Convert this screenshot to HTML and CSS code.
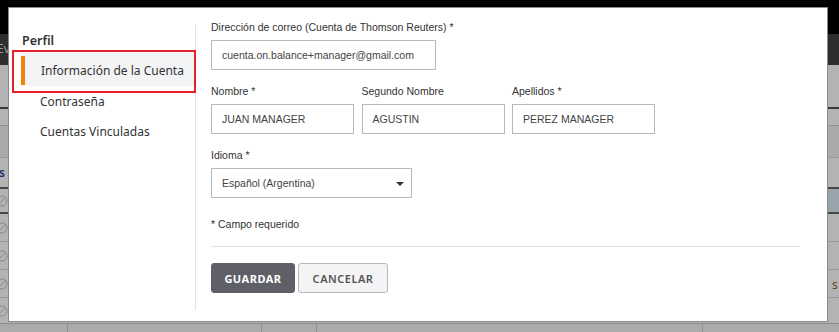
FILE: index.html
```html
<!DOCTYPE html>
<html lang="es">
<head>
<meta charset="utf-8">
<title>Perfil</title>
<link rel="stylesheet" href="styles.css">
</head>
<body>
<div class="backdrop">
  <div class="bd-top"></div>
  <div class="bd-dark"><span class="bd-text">Ev</span></div>
  <div class="bd-row r1"></div>
  <div class="bd-row r2"></div>
  <div class="bd-row r3"></div>
  <div class="bd-row r4"><span class="cut-left blue">s</span></div>
  <div class="bd-row r5"><span class="cut-left"><svg class="ban" viewBox="0 0 12 12"><circle cx="6" cy="6" r="5"/><line x1="2.5" y1="9.5" x2="9.5" y2="2.5"/></svg></span><span class="sel-cell"></span></div>
  <div class="bd-row r6"><span class="cut-left"><svg class="ban" viewBox="0 0 12 12"><circle cx="6" cy="6" r="5"/><line x1="2.5" y1="9.5" x2="9.5" y2="2.5"/></svg></span></div>
  <div class="bd-row r7"><span class="cut-left"><svg class="ban" viewBox="0 0 12 12"><circle cx="6" cy="6" r="5"/><line x1="2.5" y1="9.5" x2="9.5" y2="2.5"/></svg></span></div>
  <div class="bd-row r8"><span class="cut-left"><svg class="ban" viewBox="0 0 12 12"><circle cx="6" cy="6" r="5"/><line x1="2.5" y1="9.5" x2="9.5" y2="2.5"/></svg></span><span class="cut-right">s</span></div>
  <div class="bd-row r9"><span class="cut-left"><svg class="ban" viewBox="0 0 12 12"><circle cx="6" cy="6" r="5"/><line x1="2.5" y1="9.5" x2="9.5" y2="2.5"/></svg></span></div>
  <div class="bd-bottom">
    <span class="bcell c1"></span><span class="bcell c2"></span><span class="bcell c3"></span><span class="bcell c4"></span><span class="bcell c5"></span>
  </div>
</div>

<div class="modal">
  <nav class="side">
    <div class="side-title">Perfil</div>
    <a class="side-item active">Información de la Cuenta</a>
    <a class="side-item">Contraseña</a>
    <a class="side-item">Cuentas Vinculadas</a>
  </nav>
  <div class="highlight"></div>
  <div class="vdivider"></div>
  <form class="form">
    <div class="field">
      <label class="lbl">Dirección de correo (Cuenta de Thomson Reuters) *</label>
      <div class="input email">cuenta.on.balance+manager@gmail.com</div>
    </div>
    <div class="names">
      <div class="field">
        <label class="lbl">Nombre *</label>
        <div class="input">JUAN MANAGER</div>
      </div>
      <div class="field">
        <label class="lbl">Segundo Nombre</label>
        <div class="input">AGUSTIN</div>
      </div>
      <div class="field">
        <label class="lbl">Apellidos *</label>
        <div class="input">PEREZ MANAGER</div>
      </div>
    </div>
    <div class="field">
      <label class="lbl">Idioma *</label>
      <div class="input select"><span>Español (Argentina)</span><span class="caret"></span></div>
    </div>
    <div class="req">* Campo requerido</div>
    <div class="hdivider"></div>
    <div class="buttons">
      <button type="button" class="btn primary">GUARDAR</button>
      <button type="button" class="btn secondary">CANCELAR</button>
    </div>
  </form>
</div>
</body>
</html>
```
FILE: styles.css
```css
* { box-sizing: border-box; }
html, body { margin: 0; padding: 0; }
body {
  width: 839px;
  height: 332px;
  overflow: hidden;
  position: relative;
  font-family: "Liberation Sans", Arial, sans-serif;
  background: #b3b3b3;
}

/* backdrop page */
.backdrop { width: 839px; }
.bd-top { height: 34px; background: #000; }
.bd-dark {
  height: 31px; background: #2e2e2e;
  font-family: "Noto Sans", sans-serif; font-size: 12px; color: #9a9a9a;
  padding-top: 6px;
}
.bd-text { margin-left: -3px; }
.bd-row { position: relative; background: #b3b3b3; border-bottom: 1px solid #999; }
.r1 { height: 44px; border-bottom: 2px solid #3a3a3a; }
.r2 { height: 17px; border-bottom: 1px solid #8f8f8f; }
.r3 { height: 32px; background: #aaaaaa; }
.r4 { height: 31px; border-bottom: 2px solid #474747; }
.r5 { height: 25px; border-bottom: 2px solid #474747; }
.r6 { height: 28px; }
.r7 { height: 28px; }
.r8 { height: 28px; }
.r9 { height: 25px; border-bottom: none; }
.sel-cell { position: absolute; right: 0; top: 0; width: 20px; height: 100%; background: #97a4ab; }
.cut-left {
  position: absolute; left: -4px; top: 50%; transform: translateY(-50%);
  font-family: "Noto Sans", sans-serif; font-size: 12px; line-height: 12px; color: #333;
  display: flex;
}
.cut-left.blue { left: -1px; color: #1d2a66; font-weight: 600; }
.cut-right {
  position: absolute; left: 832px; top: 50%; transform: translateY(-50%);
  font-family: "Noto Sans", sans-serif; font-size: 12px; color: #5a4414;
}
.ban { width: 12px; height: 12px; fill: none; stroke: #8a8a8a; stroke-width: 1; }
.bd-bottom {
  height: 10px; background: #ababab; border-top: 1px solid #8c8c8c;
  display: flex;
}
.bcell { height: 100%; border-right: 1px solid #909090; }
.c1 { width: 68px; }
.c2 { width: 194px; }
.c3 { width: 55px; }
.c4 { width: 386px; }
.c5 { flex: 1; border-right: none; }

/* modal */
.modal {
  position: absolute;
  left: 8px; top: 7px;
  width: 820px; height: 315px;
  background: #fff;
  border: 1px solid #8a8a8a;
  display: flex;
}
.side {
  width: 186px;
  flex: none;
  padding-top: 24px;
  font-family: "Noto Sans", "Open Sans", sans-serif;
  font-size: 12px;
  color: #333;
  display: flex;
  flex-direction: column;
  white-space: nowrap;
}
.side-title {
  padding-left: 13px;
  line-height: 17px;
  font-size: 12.5px;
  font-weight: 600;
  margin-bottom: 4px;
}
.side-item {
  position: relative;
  display: flex;
  align-items: center;
  height: 30px;
  margin-left: 12px;
  margin-right: 1px;
  padding-left: 19px;
  color: #333;
}
.side-item.active {
  height: 33px;
  padding-top: 2px;
  padding-left: 20px;
  background: #f3f4f6;
}
.side-item.active::before {
  content: "";
  position: absolute;
  left: 0; top: 3px; bottom: 1px;
  width: 4px;
  background: #f5820b;
}
.highlight {
  position: absolute;
  left: 3px; top: 42px;
  width: 184px; height: 43px;
  border: 2px solid #e8202a;
}
.vdivider {
  width: 1px;
  flex: none;
  background: #e4e4e4;
  margin: 17px 0 11px;
}
.form {
  flex: 1;
  margin: 0;
  padding: 12px 27px 0 15px;
  font-size: 10.5px;
  color: #333;
  display: flex;
  flex-direction: column;
}
.field { display: flex; flex-direction: column; margin-bottom: 14px; }
.lbl { line-height: 15px; margin-bottom: 5px; color: #333; }
.input {
  height: 30px;
  border: 1px solid #b9b9b9;
  padding-left: 10px;
  display: flex;
  align-items: center;
  color: #444;
  background: #fff;
}
.email { width: 225px; }
.names {
  display: grid;
  grid-template-columns: repeat(3, 143px);
  column-gap: 7.5px;
}
.select { width: 201px; justify-content: space-between; padding-right: 7px; }
.caret {
  width: 0; height: 0;
  border-left: 4px solid transparent;
  border-right: 4px solid transparent;
  border-top: 4px solid #333;
  margin-top: 1px;
}
.req { line-height: 15px; margin-top: 5px; color: #333; }
.hdivider { height: 1px; background: #e2e2e2; margin-top: 14px; }
.buttons { display: flex; gap: 3px; margin-top: 16px; }
.btn {
  height: 30px;
  border-radius: 3px;
  font-family: "Noto Sans", "Open Sans", sans-serif;
  font-size: 11px;
  font-weight: 700;
  letter-spacing: 0.5px;
  padding: 0;
  cursor: pointer;
}
.primary { width: 84px; background: #5f5f67; color: #fff; border: 1px solid #5f5f67; }
.secondary { width: 90px; background: #f4f4f6; color: #555; border: 1px solid #b9b9b9; font-weight: 600; }
```
